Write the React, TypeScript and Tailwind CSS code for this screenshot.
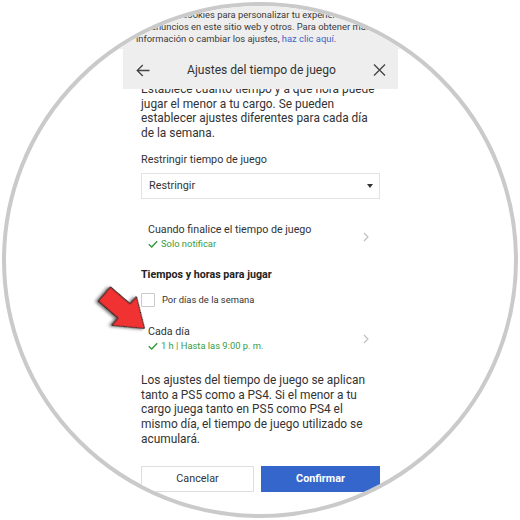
import type React from "react"

function BackArrow() {
  return (
    <svg width="14" height="13" viewBox="0 0 14 13" fill="none" stroke="#444" strokeWidth="1.3">
      <path d="M13.5 6.5H1.2M6.8 1L1.2 6.5L6.8 12" />
    </svg>
  )
}

function CloseIcon() {
  return (
    <svg width="13" height="12" viewBox="0 0 13 12" fill="none" stroke="#444" strokeWidth="1.3">
      <path d="M1 0.5L12 11.5M12 0.5L1 11.5" />
    </svg>
  )
}

function Chevron() {
  return (
    <svg width="6" height="10" viewBox="0 0 6 10" fill="none" stroke="#bdbdbd" strokeWidth="1.1">
      <path d="M1 1L5 5L1 9" />
    </svg>
  )
}

function Check() {
  return (
    <svg width="10" height="8" viewBox="0 0 10 8" fill="none" stroke="#3a9b3f" strokeWidth="1.5">
      <path d="M0.8 4.2L3.7 7L9.2 1.2" />
    </svg>
  )
}

function SettingRow({ title, value }: { title: string; value: string }) {
  return (
    <div className="flex items-center pl-[7px] pr-[11px]">
      <div className="flex-1">
        <div className="text-[10.7px] leading-[13px] text-[#333]">{title}</div>
        <div className="mt-[2px] flex items-center gap-[3px] text-[9.4px] leading-[12px] text-[#3a9b3f]">
          <Check />
          <span>{value}</span>
        </div>
      </div>
      <Chevron />
    </div>
  )
}

function RedArrow() {
  return (
    <svg width="80" height="80" viewBox="0 0 80 80" className="absolute left-[80px] top-[270px]">
      <defs>
        <filter id="sh" x="-30%" y="-30%" width="160%" height="160%">
          <feDropShadow dx="-1.5" dy="2" stdDeviation="1.4" floodColor="#000" floodOpacity="0.55" />
        </filter>
      </defs>
      <g transform="translate(24.3 24) rotate(40.6)" filter="url(#sh)">
        <path
          d="M0 -9.3H26V-19L53 0L26 19V9.3H0Z"
          fill="#f03232"
          stroke="#1a1a1a"
          strokeWidth="1"
          strokeLinejoin="miter"
        />
      </g>
    </svg>
  )
}

export default function App() {
  return (
    <div className="relative w-[520px] h-[520px] bg-white p-[2px] font-[Roboto,sans-serif]">
      <div className="w-[516px] h-[516px] rounded-full border-[4px] border-[#cacaca] overflow-hidden bg-white">
        {/* cookie banner */}
        <div className="h-[43px] bg-[#eeeeee] pl-[130px] pt-[3px] text-[9.4px] leading-[11.75px] text-[#3a3a3a] whitespace-nowrap">
          <div>Utilizamos cookies para personalizar tu experiencia y</div>
          <div>los anuncios en este sitio web y otros. Para obtener más</div>
          <div>
            información o cambiar los ajustes, <span className="text-[#3b64c8]">haz clic aquí</span>.
          </div>
        </div>

        <div className="ml-[117px] w-[275px]">
          <div className="h-[40px] flex items-center pl-[13px] pr-[12px] pt-[2px] bg-[#eeeeee]">
            <BackArrow />
            <div className="flex-1 text-center text-[12.1px] text-[#333]">Ajustes del tiempo de juego</div>
            <CloseIcon />
          </div>

          <div className="overflow-hidden px-[18px] text-[#333]">
            <p className="-mt-[7px] text-[11.9px] leading-[14.5px] whitespace-nowrap">
              Establece cuánto tiempo y a qué hora puede
              <br />
              jugar el menor a tu cargo. Se pueden
              <br />
              establecer ajustes diferentes para cada día
              <br />
              de la semana.
            </p>

            <div className="mt-[13px] text-[10.8px] leading-[13px]">Restringir tiempo de juego</div>
            <div className="mt-[7px] h-[26px] border border-[#e2e2e2] flex items-center justify-between pl-[7px] pr-[6px]">
              <span className="text-[10.8px]">Restringir</span>
              <svg width="6" height="4" viewBox="0 0 6 4">
                <path d="M0 0H6L3 4Z" fill="#333" />
              </svg>
            </div>

            <div className="mt-[24px]">
              <SettingRow title="Cuando finalice el tiempo de juego" value="Solo notificar" />
            </div>

            <div className="mt-[18px] text-[10.7px] leading-[13px] font-bold text-[#222]">Tiempos y horas para jugar</div>

            <div className="mt-[12px] flex items-center gap-[7px]">
              <div className="w-[14px] h-[14px] border border-[#cacaca] rounded-[1px] bg-white" />
              <span className="text-[9.4px] leading-[12px] -mt-[1px]">Por días de la semana</span>
            </div>

            <div className="mt-[18px]">
              <SettingRow title="Cada día" value="1 h | Hasta las 9:00 p. m." />
            </div>

            <p className="mt-[21px] text-[11.9px] leading-[14.67px] whitespace-nowrap">
              Los ajustes del tiempo de juego se aplican
              <br />
              tanto a PS5 como a PS4. Si el menor a tu
              <br />
              cargo juega tanto en PS5 como PS4 el
              <br />
              mismo día, el tiempo de juego utilizado se
              <br />
              acumulará.
            </p>

            <div className="mt-[20px] flex gap-[7px]">
              <button className="w-[113px] h-[26px] border border-[#dedede] bg-white text-[10.8px] text-[#333]">
                Cancelar
              </button>
              <button className="flex-1 h-[26px] bg-[#3466cc] text-[10.8px] font-bold text-white">Confirmar</button>
            </div>
          </div>
        </div>
      </div>
      <RedArrow />
    </div>
  )
}
